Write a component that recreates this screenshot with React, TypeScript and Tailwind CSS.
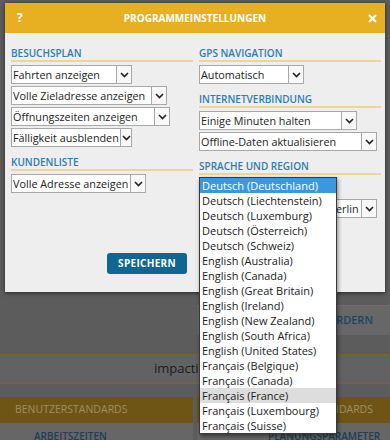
import React from "react";

const languages = [
  "Deutsch (Deutschland)",
  "Deutsch (Liechtenstein)",
  "Deutsch (Luxemburg)",
  "Deutsch (Österreich)",
  "Deutsch (Schweiz)",
  "English (Australia)",
  "English (Canada)",
  "English (Great Britain)",
  "English (Ireland)",
  "English (New Zealand)",
  "English (South Africa)",
  "English (United States)",
  "Français (Belgique)",
  "Français (Canada)",
  "Français (France)",
  "Français (Luxembourg)",
  "Français (Suisse)",
];

const Chevron = () => (
  <svg width="9" height="6" viewBox="0 0 9 6" fill="none">
    <path d="M1 1l3.5 3.5L8 1" stroke="#222" strokeWidth="1.6" />
  </svg>
);

function Select({ value, width, narrow }: { value: string; width: string; narrow?: boolean }) {
  return (
    <div className={`flex h-[19px] ${width} border border-[#a8a8a8] bg-white`}>
      <span className="flex-1 overflow-hidden whitespace-nowrap pl-[1px] text-[10.8px] leading-[17px] text-[#222]">
        {value}
      </span>
      <span
        className={`flex ${narrow ? "w-[11px]" : "w-[15px]"} items-center justify-center border-l border-[#a8a8a8] bg-[#f8f8f8]`}
      >
        <Chevron />
      </span>
    </div>
  );
}

function Heading({ children, first }: { children: React.ReactNode; first?: boolean }) {
  return (
    <div
      className={`${first ? "" : "mt-[9px]"} mb-[3px] border-b-2 border-[#ecd596] text-[10px] font-semibold leading-[13px] text-[#2c7cb6]`}
    >
      {children}
    </div>
  );
}

export default function App() {
  const selected = "Deutsch (Deutschland)";
  const hovered = "Français (France)";

  return (
    <div className="relative h-[440px] w-[390px] overflow-hidden bg-[#5c5c5c] font-['Open_Sans',sans-serif]">
      {/* page behind the dialog (dimmed) */}
      <div className="pt-[305px]">
        <div className="grid grid-cols-2 gap-[4px]">
          <div />
          <div className="flex h-[30px] items-center justify-end border-t border-dotted border-[#8a7232] bg-[#676767] pr-[17px] text-[11px] font-semibold text-[#1c4561]">
            UNTERLAGEN ANFORDERN
          </div>
        </div>
        <div className="mt-[19px] flex h-[30px] items-center border-y border-[#7d6528] bg-[#626262] pl-[154px] text-[13px] text-[#1c1c1c]">
          impactit GmbH
        </div>
        <div className="mt-[13px] grid grid-cols-2 gap-[4px]">
          <div>
            <div className="flex h-[26px] items-center bg-[#6e5516] pl-[15px] text-[10.5px] text-[#a08d62]">
              BENUTZERSTANDARDS
            </div>
            <div className="h-[20px] bg-[#666666] pl-[34px] pt-[6px] text-[10px] font-semibold leading-[15px] text-[#1d3f58]">
              ARBEITSZEITEN
            </div>
          </div>
          <div>
            <div className="flex h-[26px] items-center justify-end bg-[#6e5516] pr-[17px] text-[10.5px] text-[#a08d62]">
              ORGANISATIONSSTANDARDS
            </div>
            <div className="h-[20px] bg-[#666666] pl-[71px] pt-[6px] text-[10px] font-semibold leading-[15px] text-[#1d3f58]">
              PLANUNGSPARAMETER
            </div>
          </div>
        </div>
      </div>

      {/* dialog */}
      <div className="absolute left-[5px] top-[3px] flex h-[289px] w-[380px] flex-col bg-[#eeeeee] shadow-[0_1px_4px_rgba(0,0,0,0.6)]">
        <div className="grid h-[30px] grid-cols-[40px_1fr_40px] items-center bg-[#e6b022] text-white">
          <span className="pl-[12px] text-[12px] font-bold">?</span>
          <span className="text-center text-[10px] font-bold">PROGRAMMEINSTELLUNGEN</span>
          <span className="flex justify-end pr-[8px]">
            <svg width="9" height="9" viewBox="0 0 9 9">
              <path d="M1 1l7 7M8 1L1 8" stroke="#fff" strokeWidth="2" />
            </svg>
          </span>
        </div>

        <div className="grid grid-cols-2 gap-[6px] pl-[6px] pr-[4px] pt-[14px]">
          <div>
            <Heading first>BESUCHSPLAN</Heading>
            <div className="flex flex-col gap-[2px]">
              <Select value="Fahrten anzeigen" width="w-[121px]" />
              <Select value="Volle Zieladresse anzeigen" width="w-[156px]" />
              <Select value="Öffnungszeiten anzeigen" width="w-[159px]" />
              <Select value="Fälligkeit ausblenden" width="w-[121px]" narrow />
            </div>
            <Heading>KUNDENLISTE</Heading>
            <Select value="Volle Adresse anzeigen" width="w-[135px]" />
          </div>

          <div>
            <Heading first>GPS NAVIGATION</Heading>
            <Select value="Automatisch" width="w-[105px]" />
            <Heading>INTERNETVERBINDUNG</Heading>
            <div className="flex flex-col gap-[2px]">
              <Select value="Einige Minuten halten" width="w-[158px]" />
              <Select value="Offline-Daten aktualisieren" width="w-[178px]" />
            </div>
            <Heading>SPRACHE UND REGION</Heading>
            <div className="relative flex flex-col gap-[2px]">
              <Select value={selected} width="w-[138px]" />
              <Select value="(UTC+01:00) Amsterdam, Berlin" width="w-[178px]" />

              {/* open language list */}
              <div className="absolute left-0 top-[-1px] w-[138px] border border-[#3a3a3a] bg-white shadow-[1px_2px_4px_rgba(0,0,0,0.45)]">
                {languages.map((lang) => (
                  <div
                    key={lang}
                    className={`h-[15px] whitespace-nowrap pl-[2px] text-[11px] leading-[15px] ${
                      lang === selected
                        ? "bg-[#3b98dd] text-white"
                        : lang === hovered
                        ? "bg-[#dddddd] text-[#222]"
                        : "text-[#222]"
                    }`}
                  >
                    {lang}
                  </div>
                ))}
              </div>
            </div>
          </div>
        </div>

        <div className="mt-auto flex justify-center gap-[16px] pb-[18px]">
          <button className="h-[21px] w-[80px] rounded-[3px] bg-[#0f6693] text-[10px] font-bold tracking-[0.3px] text-white">
            SPEICHERN
          </button>
          <button className="h-[21px] w-[80px] rounded-[3px] bg-[#0f6693] text-[10px] font-bold tracking-[0.3px] text-white">
            ABBRECHEN
          </button>
        </div>
      </div>
    </div>
  );
}
